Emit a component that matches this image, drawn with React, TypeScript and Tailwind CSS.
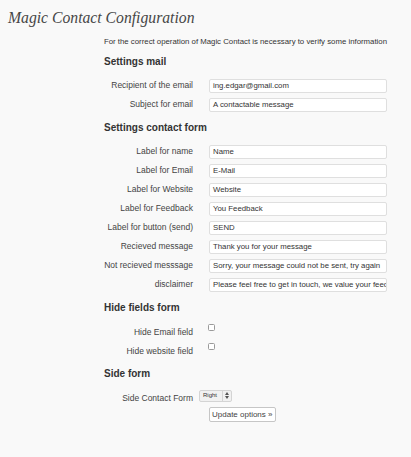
const sans = { fontFamily: '"Liberation Sans", Arial, sans-serif' };

type Row = { label: string; value: string };

const mailRows: Row[] = [
  { label: "Recipient of the email", value: "ing.edgar@gmail.com" },
  { label: "Subject for email", value: "A contactable message" },
];

const formRows: Row[] = [
  { label: "Label for name", value: "Name" },
  { label: "Label for Email", value: "E-Mail" },
  { label: "Label for Website", value: "Website" },
  { label: "Label for Feedback", value: "You Feedback" },
  { label: "Label for button (send)", value: "SEND" },
  { label: "Recieved message", value: "Thank you for your message" },
  { label: "Not recieved messsage", value: "Sorry, your message could not be sent, try again" },
  { label: "disclaimer", value: "Please feel free to get in touch, we value your feedback" },
];

function Heading({ children }: { children: React.ReactNode }) {
  return (
    <h3 className="ml-[104px] my-[7px] h-[14px] text-[10px] font-bold leading-[14px] text-[#333]">
      {children}
    </h3>
  );
}

function TextRow({ label, value }: Row) {
  return (
    <div className="flex h-[19px] items-center">
      <label className="w-[194px] pr-[1px] text-right text-[8.5px] text-[#444]">{label}</label>
      <div className="ml-[15px] flex h-[14px] w-[178px] items-center overflow-hidden whitespace-nowrap rounded-[2px] border border-[#dfdfdf] bg-white pl-[3px] text-[7.8px] text-[#333]">
        {value}
      </div>
    </div>
  );
}

function CheckRow({ label }: { label: string }) {
  return (
    <div className="flex h-[19px] items-center">
      <label className="w-[194px] pr-[1px] pt-[2px] text-right text-[8.5px] text-[#444]">{label}</label>
      <div className="ml-[14px] mb-[8px] h-[7px] w-[7px] rounded-[1.5px] border border-[#9a9a9a] bg-white" />
    </div>
  );
}

export default function App() {
  return (
    <div className="min-h-[457px] w-[411px] bg-[#f9f9f9] pt-[8px]" style={sans}>
      <h2
        className="ml-[8px] h-[20px] text-[15.7px] italic leading-[20px] text-[#464646]"
        style={{ fontFamily: '"Liberation Serif", Georgia, serif' }}
      >
        Magic Contact Configuration
      </h2>
      <p className="ml-[104px] mt-[8px] h-[12px] whitespace-nowrap text-[7.8px] leading-[12px] text-[#333]">
        For the correct operation of Magic Contact is necessary to verify some information
      </p>

      <Heading>Settings mail</Heading>
      {mailRows.map((r) => (
        <TextRow key={r.label} {...r} />
      ))}

      <Heading>Settings contact form</Heading>
      {formRows.map((r) => (
        <TextRow key={r.label} {...r} />
      ))}

      <Heading>Hide fields form</Heading>
      <CheckRow label="Hide Email field" />
      <CheckRow label="Hide website field" />

      <Heading>Side form</Heading>
      <div className="flex h-[19px] items-center">
        <label className="w-[194px] pr-[1px] pt-[1px] text-right text-[8.5px] text-[#444]">Side Contact Form</label>
        <div className="ml-[5px] mb-[4px] flex h-[12px] w-[33px] items-center rounded-[2px] border border-[#d4d4d4] bg-[#f1f1f1] text-[6px] text-[#333]">
          <span className="w-[22px] pl-[3px]">Right</span>
          <span className="flex h-full flex-1 items-center justify-center border-l border-[#d4d4d4]">
            <svg width="4" height="7" viewBox="0 0 4 7">
              <path d="M0 3 L2 0 L4 3 Z M0 4 L2 7 L4 4 Z" fill="#555" />
            </svg>
          </span>
        </div>
      </div>
      <button className="ml-[209px] block h-[15px] rounded-[2px] border border-[#c6c6c6] bg-white px-[2px] text-[8px] leading-[13px] text-[#444]">
        Update options »
      </button>
    </div>
  );
}
